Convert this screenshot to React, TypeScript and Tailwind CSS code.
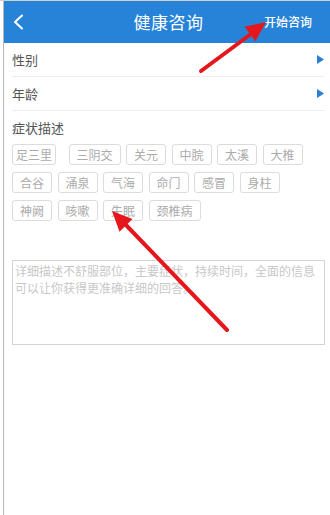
import React from 'react';

type Tag = { name: string; w: string };

const tagRows: Tag[][] = [
    [
        { name: '足三里', w: 'w-[44px] mr-[7px]' },
        { name: '三阴交', w: 'w-[52px]' },
        { name: '关元', w: 'w-[40px]' },
        { name: '中脘', w: 'w-[40px]' },
        { name: '太溪', w: 'w-[40px]' },
        { name: '大椎', w: 'w-[40px]' },
    ],
    [
        { name: '合谷', w: 'w-[40px]' },
        { name: '涌泉', w: 'w-[40px]' },
        { name: '气海', w: 'w-[40px]' },
        { name: '命门', w: 'w-[40px]' },
        { name: '感冒', w: 'w-[40px]' },
        { name: '身柱', w: 'w-[40px]' },
    ],
    [
        { name: '神阙', w: 'w-[40px]' },
        { name: '咳嗽', w: 'w-[40px]' },
        { name: '失眠', w: 'w-[40px]' },
        { name: '颈椎病', w: 'w-[52px]' },
    ],
];

const font = { fontFamily: '"Noto Sans CJK SC", "Noto Sans", sans-serif' };

const Row: React.FC<{ label: string }> = ({ label }) => (
    <div className="ml-2 mr-[5px] h-[34px] flex items-center justify-between border-b border-[#eeeeee]">
        <span className="text-[13px] text-[#555555]">{label}</span>
        <svg width="7" height="9" viewBox="0 0 7 9" className="mr-[1px]">
            <polygon points="0,0 7,4.5 0,9" fill="#2a7fd0" />
        </svg>
    </div>
);

const App: React.FC = () => {
    return (
        <div className="relative w-[330px] h-[515px] bg-white overflow-hidden pl-[3px] border-t border-[#d0d0d0]" style={font}>
            <div className="h-full border-l border-[#b8b8b8] flex flex-col">
                <div className="h-[42px] bg-[#2783d8] grid grid-cols-[1fr_auto_1fr] items-center text-white">
                    <div className="pl-[9px] flex items-center">
                        <svg width="12" height="16" viewBox="0 0 12 16">
                            <polyline points="9,1.5 2,8 9,14.5" fill="none" stroke="white" strokeWidth="2" strokeLinecap="round" strokeLinejoin="round" />
                        </svg>
                    </div>
                    <div className="text-[17px] tracking-[0.5px] pl-[3px]">健康咨询</div>
                    <div className="flex justify-end pr-[18px] text-[12px] font-medium">开始咨询</div>
                </div>

                <Row label="性别" />
                <Row label="年龄" />

                <div className="pl-2 pt-[9px] text-[13px] leading-[16px] text-[#555555]">症状描述</div>
                <div className="pl-2 mt-2 flex flex-col gap-y-[7px]">
                    {tagRows.map((row, i) => (
                        <div key={i} className="flex gap-x-[5.5px]">
                            {row.map((tag) => (
                                <div
                                    key={tag.name}
                                    className={`${tag.w} h-[21px] flex items-center justify-center border border-[#dcdcdc] rounded-[3px] text-[12px] text-[#ababab]`}
                                >
                                    {tag.name}
                                </div>
                            ))}
                        </div>
                    ))}
                </div>

                <div className="ml-2 mr-[5px] mt-[39px] h-[85px] border border-[#d4d4d4] px-[2px] pt-[1px] text-[12px] leading-[17px] text-[#c8c8c8]">
                    详细描述不舒服部位，主要症状，持续时间，全面的信息可以让你获得更准确详细的回答。
                </div>
            </div>

            <svg className="absolute inset-0 pointer-events-none" width="330" height="515" viewBox="0 0 330 515">
                <line x1="201" y1="70" x2="251" y2="33" stroke="#e5171c" strokeWidth="4" strokeLinecap="round" />
                <polygon points="266,21 255.4,40.2 244.6,25.8" fill="#e5171c" />
                <line x1="227" y1="329" x2="125" y2="223" stroke="#e5171c" strokeWidth="4" strokeLinecap="round" />
                <polygon points="112,210 132.5,218.1 119.5,230.7" fill="#e5171c" />
            </svg>
        </div>
    );
};

export default App;
